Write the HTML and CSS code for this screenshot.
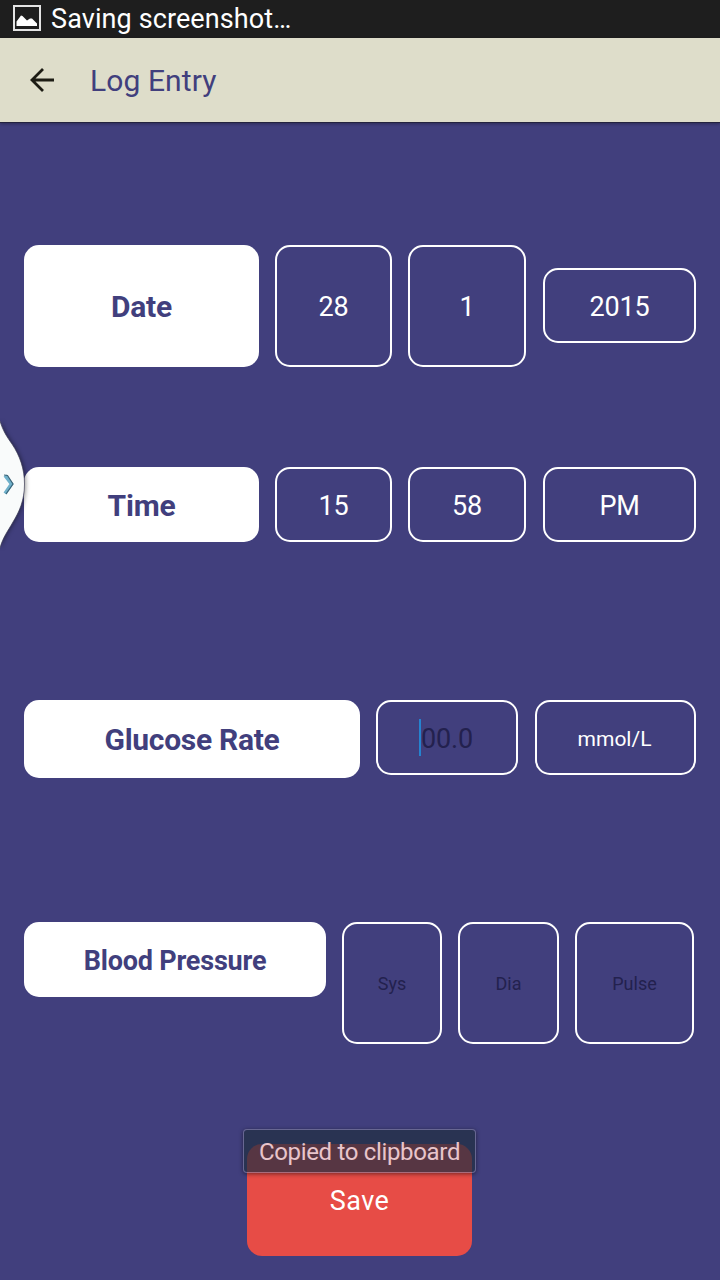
FILE: index.html
```html
<!DOCTYPE html>
<html lang="en">
<head>
    <meta charset="UTF-8">
    <meta name="viewport" content="width=device-width, initial-scale=1.0">
    <title>Log Entry</title>
    <link rel="stylesheet" href="styles.css">
</head>
<body>
    <div class="status-bar">
        <svg class="status-icon" width="29" height="27" viewBox="0 0 29 27">
            <rect x="2" y="1" width="26" height="24" fill="none" stroke="#e4e4e4" stroke-width="2"/>
            <path d="M4.500 21V16.500L9 10.500L10.500 11L15 15.500L18 13.500L20 13.500L25 18.500V21Z" fill="#fff"/>
        </svg>
        <span>Saving screenshot…</span>
    </div>

    <header class="app-bar">
        <svg class="back" width="26" height="26" viewBox="0 0 26 26" fill="none" stroke="#1d1c14" stroke-width="2.800">
            <path d="M25 13H3M14 2L3 13L14 24"/>
        </svg>
        <h1>Log Entry</h1>
    </header>

    <main class="form">
        <div class="row row-date">
            <div class="label">Date</div>
            <div class="field">28</div>
            <div class="field">1</div>
            <div class="field year">2015</div>
        </div>

        <div class="row row-time">
            <div class="label">Time</div>
            <div class="field">15</div>
            <div class="field">58</div>
            <div class="field">PM</div>
        </div>

        <div class="row row-glucose">
            <div class="label">Glucose Rate</div>
            <div class="field hint focused">00.0</div>
            <div class="field unit">mmol/L</div>
        </div>

        <div class="row row-pressure">
            <div class="label">Blood Pressure</div>
            <div class="field hint">Sys</div>
            <div class="field hint">Dia</div>
            <div class="field hint">Pulse</div>
        </div>

        <button class="save">Save</button>
    </main>

    <!-- pull-out tab on the left edge -->
    <svg class="edge-tab" width="34" height="136" viewBox="0 0 34 136">
        <path d="M0 6C3 16 7 22 12 29C20 41 24.500 54 24.500 69C24.500 86 19 97 13 107C8 116 3 122 0 133Z" fill="#f9fbfb"/>
        <path d="M0 6C3 16 7 22 12 29C20 41 24.500 54 24.500 69C24.500 86 19 97 13 107C8 116 3 122 0 133" fill="none" stroke="#3b3a52" stroke-opacity="0.7" stroke-width="1"/>
        <path d="M5 60.500L11.500 69L5 78.500" fill="none" stroke="#6fb0ca" stroke-width="3.500"/>
        <path d="M4 60L7.500 60.500L13 69L6 79" fill="none" stroke="#3b6478" stroke-width="1.200"/>
    </svg>

    <div class="toast">Copied to clipboard</div>
</body>
</html>
```

FILE: styles.css
```css
* {
    box-sizing: border-box;
}

body {
    margin: 0;
    height: 1280px;
    position: relative;
    overflow: hidden;
    background: #413f7d;
    color: #fff;
    font-family: Roboto, sans-serif;
}

.status-bar {
    display: flex;
    align-items: center;
    gap: 10px;
    height: 38px;
    padding-left: 12px;
    background: #1e1e1e;
    font-size: 27px;
    letter-spacing: 0.1px;
}

.status-icon {
    margin-bottom: 2px;
}

.app-bar {
    display: flex;
    align-items: center;
    gap: 35px;
    height: 85px;
    padding-left: 29px;
    background: #deddca;
    border-bottom: 1px solid #24233f;
    box-shadow: 0 1px 3px rgba(0,0,0,0.3);
}

.app-bar h1 {
    margin: 0;
    color: #413f7d;
    font-size: 30px;
    font-weight: 400;
    letter-spacing: 0.1px;
}

.form {
    display: flex;
    flex-direction: column;
    padding: 122px 24px 0;
}

.row {
    display: grid;
    column-gap: 16px;
    align-items: start;
}

.row-date {
    grid-template-columns: 235px 117px 118px 153px;
    grid-template-rows: 122px;
    align-items: stretch;
    margin-bottom: 100px;
}

.row-time {
    grid-template-columns: 235px 117px 118px 153px;
    margin-bottom: 158px;
}

.row-date .field:last-child,
.row-time .field:last-child,
.row-glucose .field:last-child {
    margin-left: 1px;
    margin-right: -1px;
}

.row-glucose {
    grid-template-columns: 336px 142px 161px;
    margin-bottom: 144px;
}

.row-pressure {
    grid-template-columns: 302px 100px 101px 119px;
    margin-bottom: 100px;
}

.label,
.field {
    display: flex;
    align-items: center;
    justify-content: center;
    min-height: 75px;
    border-radius: 15px;
    font-size: 27px;
}

.label {
    background: #fff;
    color: #413f7d;
    font-size: 30px;
    font-weight: 700;
    letter-spacing: -0.2px;
}

.field {
    padding-top: 2px;
    border: 2px solid #fff;
    letter-spacing: -0.2px;
}

.row-date .year {
    align-self: center;
    margin-bottom: 1px;
    padding-top: 3px;
}

.hint {
    color: #23214e;
}

.focused {
    padding-right: 2px;
}

.focused::before {
    content: "";
    width: 2px;
    height: 37px;
    margin-bottom: 2px;
    background: #2583cf;
}

.row-time .label {
    padding-top: 1px;
}

.unit {
    padding-right: 2px;
    font-size: 21px;
    letter-spacing: 0;
}

.row-glucose .label {
    min-height: 78px;
    letter-spacing: -0.3px;
}

.row-pressure .label {
    padding-top: 2px;
    font-size: 27px;
}

.row-pressure .field {
    min-height: 122px;
    padding-top: 0;
    font-size: 18px;
    letter-spacing: 0;
}

.save {
    align-self: center;
    width: 225px;
    height: 112px;
    margin-right: 1px;
    padding: 2px 0 0;
    border: none;
    border-radius: 15px;
    background: #e74c46;
    color: #fff;
    font-family: inherit;
    font-size: 27px;
    letter-spacing: 0.5px;
}

.edge-tab {
    position: absolute;
    left: 0;
    top: 415px;
    filter: drop-shadow(1px 0 2px rgba(0,0,0,0.4));
}

.toast {
    position: absolute;
    left: 243px;
    top: 1129px;
    width: 233px;
    height: 44px;
    border: 1px solid rgba(130,130,160,0.6);
    border-radius: 4px;
    background: rgba(33,47,66,0.73);
    background-clip: padding-box;
    box-shadow: 0 1px 4px rgba(0,0,0,0.5);
    color: #e8c5cb;
    font-size: 24px;
    letter-spacing: -0.33px;
    line-height: 44px;
    text-align: center;
}
```
